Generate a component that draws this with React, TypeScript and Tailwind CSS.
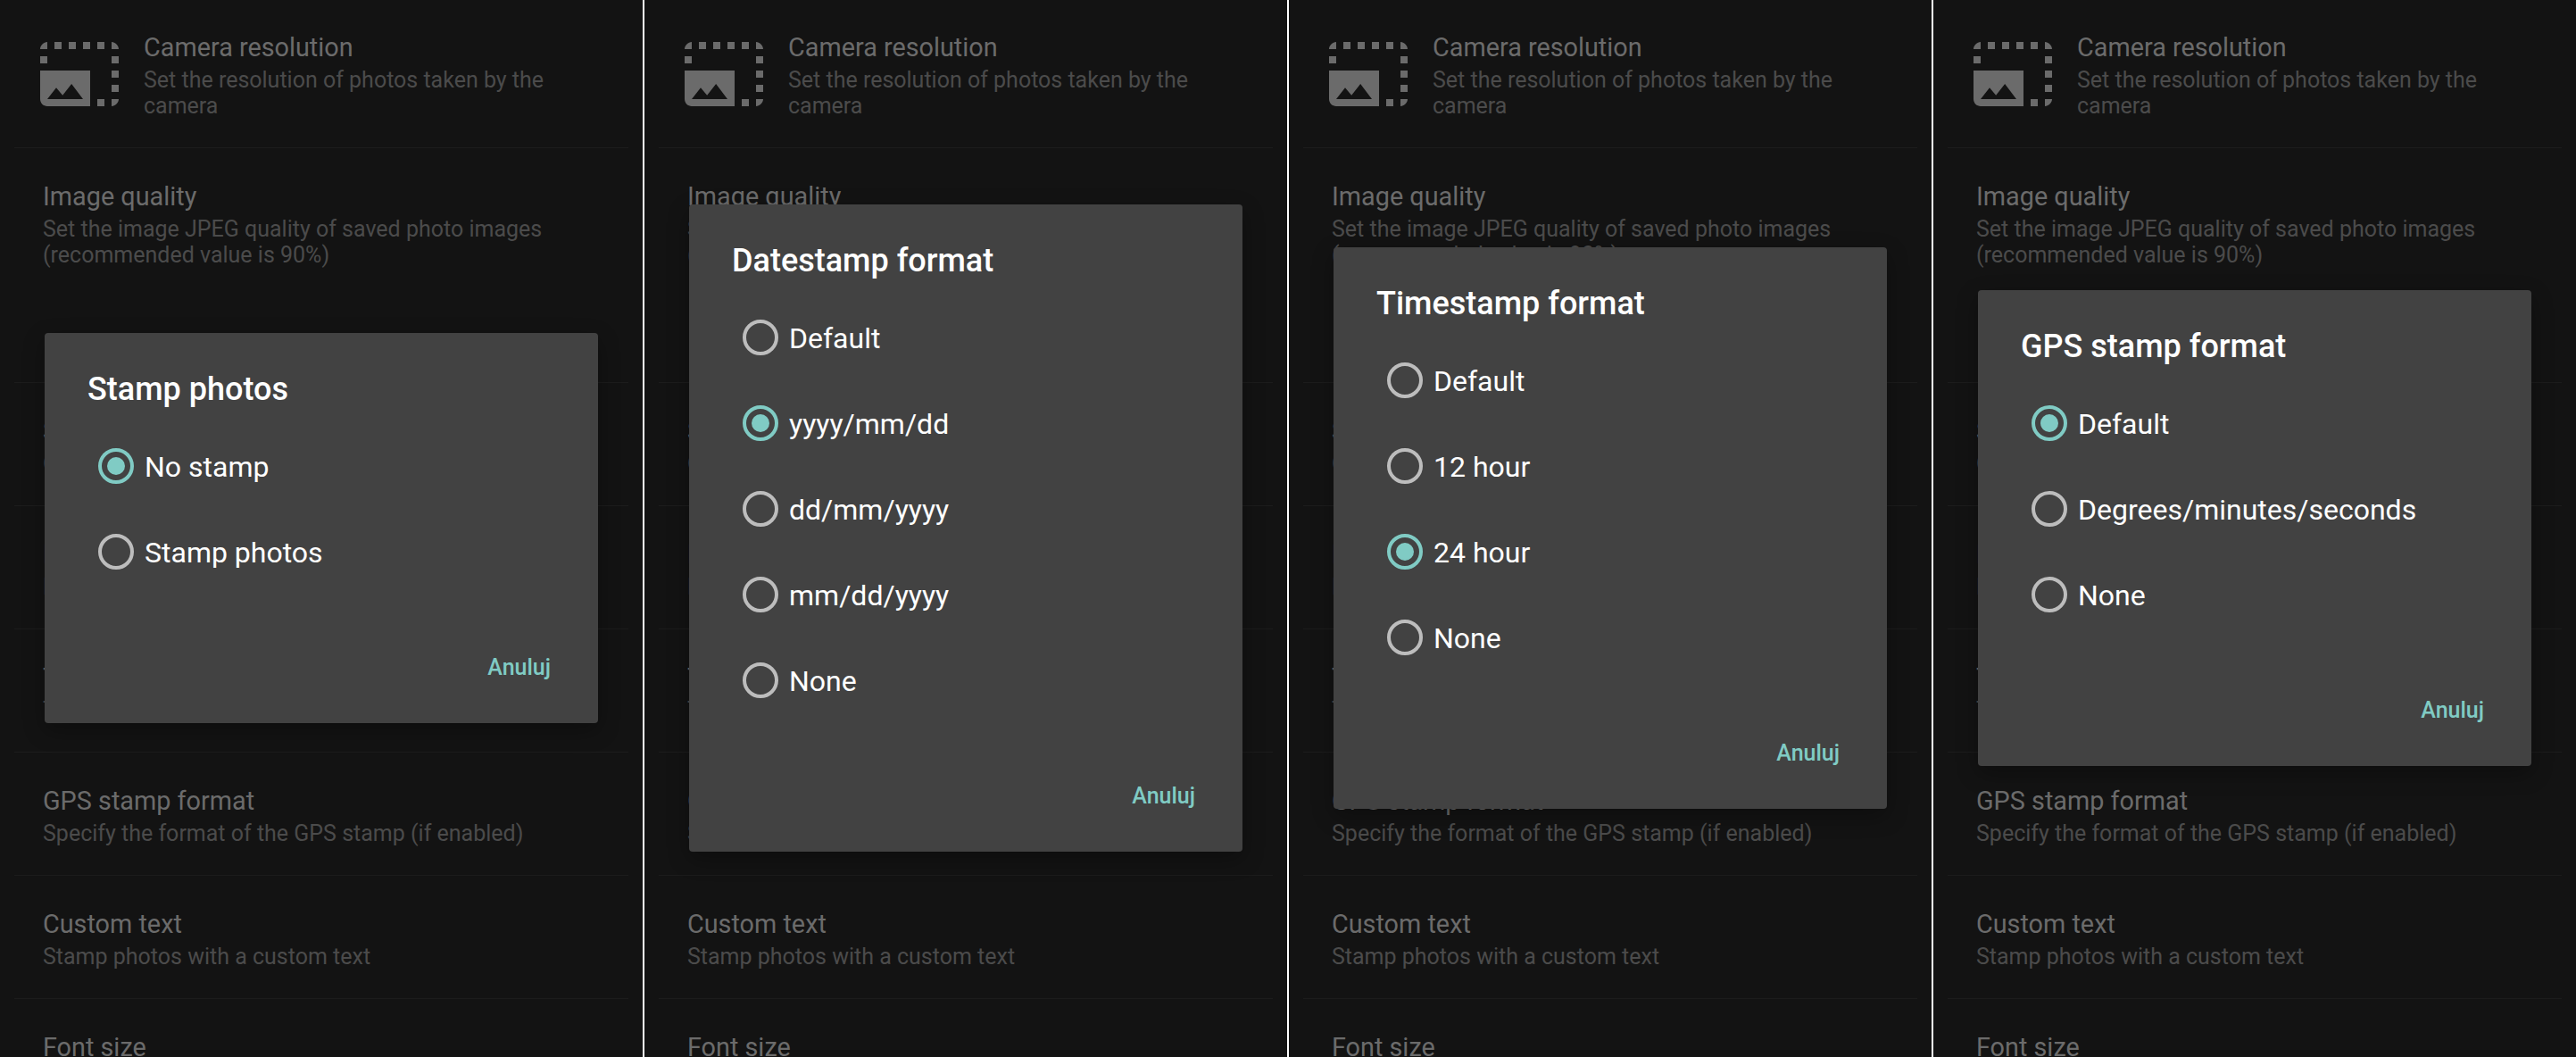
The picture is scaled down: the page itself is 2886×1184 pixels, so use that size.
const rows = [
  { t: "Camera resolution", d: "Set the resolution of photos taken by the camera", icon: true },
  { t: "Image quality", d: "Set the image JPEG quality of saved photo images (recommended value is 90%)", tall: true },
  { t: "Stamp photos", d: "Option to stamp photos with the date and time" },
  { t: "Datestamp format", d: "Date format to use for the stamp" },
  { t: "Timestamp format", d: "Time format to use for the stamp" },
  { t: "GPS stamp format", d: "Specify the format of the GPS stamp (if enabled)" },
  { t: "Custom text", d: "Stamp photos with a custom text" },
  { t: "Font size", d: "Font size for the stamp text" },
];

const dialogs = [
  { title: "Stamp photos", options: ["No stamp", "Stamp photos"], selected: 0 },
  { title: "Datestamp format", options: ["Default", "yyyy/mm/dd", "dd/mm/yyyy", "mm/dd/yyyy", "None"], selected: 1 },
  { title: "Timestamp format", options: ["Default", "12 hour", "24 hour", "None"], selected: 2 },
  { title: "GPS stamp format", options: ["Default", "Degrees/minutes/seconds", "None"], selected: 0 },
];

function PhotoIcon() {
  return (
    <svg viewBox="0 0 24 24" className="w-[96px] h-[96px] shrink-0 fill-[#6b6b6b]">
      <path d="M21 15h2v2h-2v-2zm0-4h2v2h-2v-2zm2 8h-2v2c1 0 2-1 2-2zM13 3h2v2h-2V3zm8 4h2v2h-2V7zm0-4v2h2c0-1-1-2-2-2zM1 7h2v2H1V7zm16-4h2v2h-2V3zm0 16h2v2h-2v-2zM3 3C2 3 1 4 1 5h2V3zm6 0h2v2H9V3zM5 3h2v2H5V3zm-4 8v8c0 1.1.9 2 2 2h12V11H1zm2 8l2.5-3.21 1.79 2.15 2.5-3.22L13 19H3z" />
    </svg>
  );
}

function Row({ r }: { r: (typeof rows)[number] }) {
  return (
    <div className="mx-[16px] border-b border-[#1c1c1c]">
      <div className={r.tall ? "flex pl-[32px] pr-[16px] h-[262px]" : r.icon ? "flex pl-[25px] pr-[16px] h-[165px]" : "flex pl-[32px] pr-[16px] h-[137px]"}>
        {r.icon && (
          <div className="mt-[35px] mr-[24px] shrink-0">
            <PhotoIcon />
          </div>
        )}
        <div className={r.icon ? "pt-[34px] min-w-0" : "pt-[35px] min-w-0"}>
          <div className="text-[28.8px] leading-[38px] text-[#6b6b6b]">{r.t}</div>
          <div className="mt-[3px] text-[25px] leading-[29px] text-[#4b4b4b]">{r.d}</div>
        </div>
      </div>
    </div>
  );
}

function Radio({ on }: { on: boolean }) {
  return (
    <span className={on ? "flex items-center justify-center w-[40px] h-[40px] rounded-full border-4 border-[#80cbc4] shrink-0" : "flex items-center justify-center w-[40px] h-[40px] rounded-full border-4 border-[#bdbdbd] shrink-0"}>
      {on && <span className="block w-[20px] h-[20px] rounded-full bg-[#80cbc4]" />}
    </span>
  );
}

function Dialog({ d }: { d: (typeof dialogs)[number] }) {
  return (
    <div className="w-[620px] bg-[#424242] rounded-[4px] shadow-[0_8px_24px_rgba(0,0,0,0.3)]">
      <div className="pt-[38px] h-[101px] pl-[48px] text-[36px] leading-[50px] font-medium text-white">{d.title}</div>
      {d.options.map((o, i) => (
        <div key={o} className="flex items-center h-[96px] pl-[60px] gap-[12px] text-[32px] text-white">
          <Radio on={i === d.selected} />
          <span className="pt-[2px]">{o}</span>
        </div>
      ))}
      <div className="flex justify-end items-start h-[144px] pt-[64px] pr-[53px] text-[25px] leading-[36px] font-medium text-[#80cbc4]">
        Anuluj
      </div>
    </div>
  );
}

function Panel({ d }: { d: (typeof dialogs)[number] }) {
  return (
    <div className="relative w-[720px] h-[1184px] overflow-hidden bg-[#131313] shrink-0">
      {rows.map((r) => (
        <Row key={r.t} r={r} />
      ))}
      <div className="absolute inset-0 flex items-center justify-center pb-px">
        <Dialog d={d} />
      </div>
    </div>
  );
}

export default function App() {
  return (
    <div className="flex gap-[2px] w-[2886px] h-[1184px] overflow-hidden bg-white font-['Roboto',sans-serif]">
      {dialogs.map((d) => (
        <Panel key={d.title} d={d} />
      ))}
    </div>
  );
}
